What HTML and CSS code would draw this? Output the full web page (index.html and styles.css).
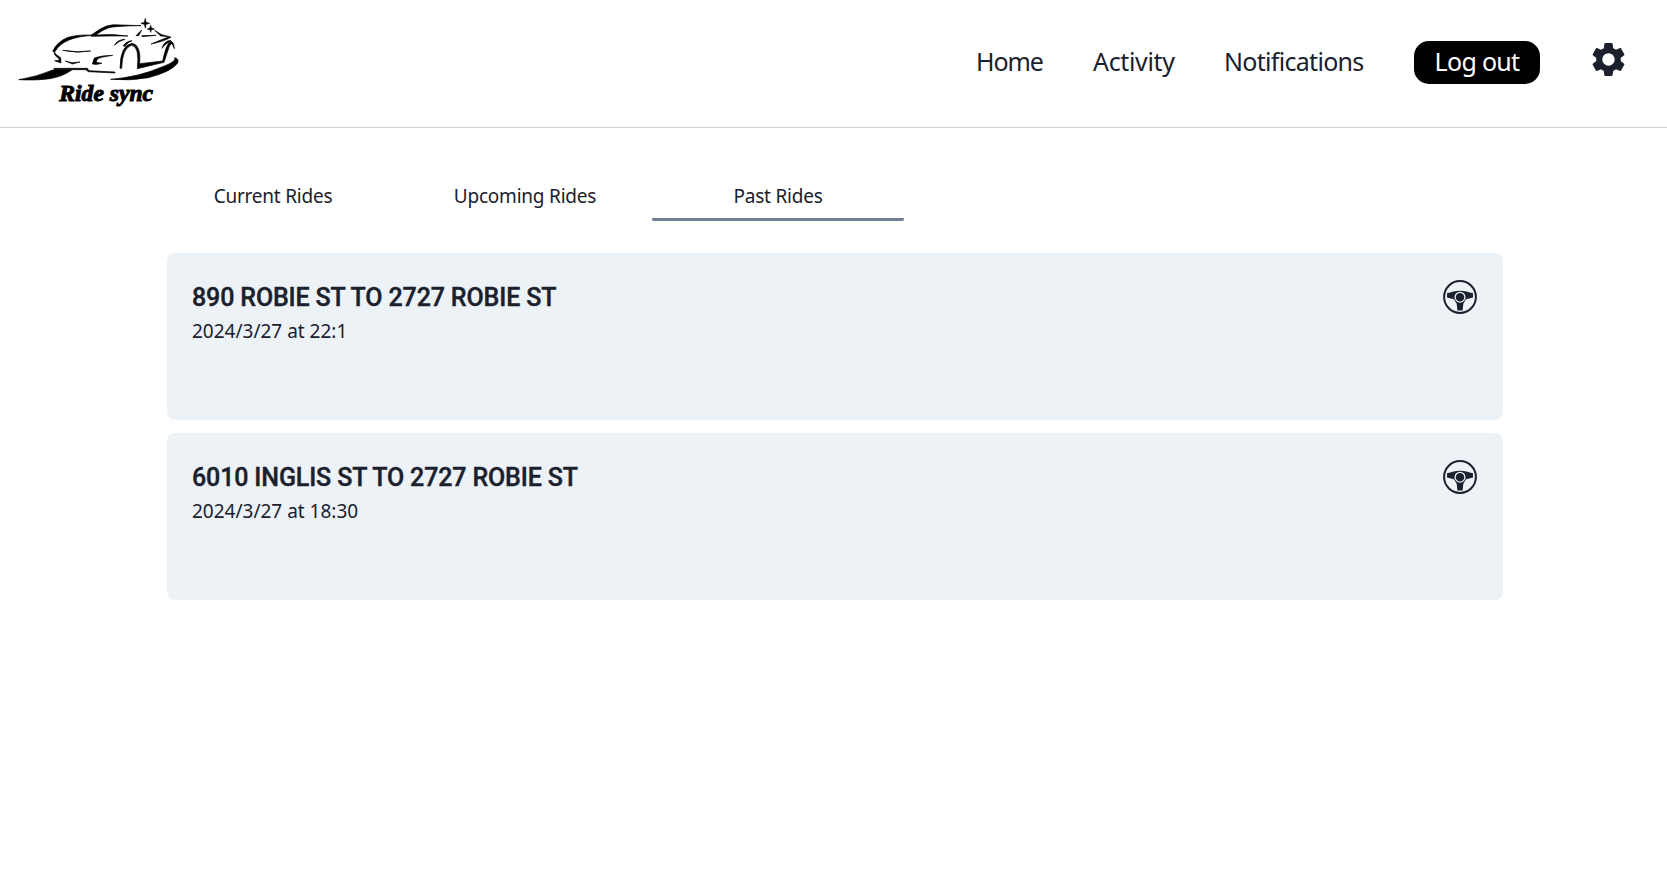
FILE: index.html
```html
<!DOCTYPE html>
<html lang="en">
<head>
<meta charset="utf-8">
<title>Ride sync</title>
<link rel="stylesheet" href="styles.css">
</head>
<body>
<svg class="defs" width="0" height="0" aria-hidden="true">
  <symbol id="wheel" viewBox="0 0 34 34">
    <circle cx="17" cy="17" r="15.900" fill="none" stroke="currentColor" stroke-width="2"/>
    <path fill="currentColor" d="M4 13.200C8 12.300 13 10.800 17 10.800s9 1.500 13 2.400v4.300l-7 1.700c-1 2-2 3-2.700 4.600L19.600 30.500h-5.200L13.700 23.800C12.900 22.200 11.900 21.200 11 19.200L4 17.500z"/>
    <circle cx="17" cy="17.200" r="4.900" fill="currentColor" stroke="#edf2f7" stroke-width="1.300"/>
  </symbol>
</svg>
<header class="header">
  <a class="logo" href="#">
    <svg viewBox="0 0 600 381" width="200" height="127" role="img" aria-label="Ride sync">
      <g class="logo-art">
        <path d="M56 239Q112 230 158 210L215 210Q190 229 150 236Q110 242 56 239z"/>
        <path d="M332 238Q420 230 485 201Q530 185 524 173Q538 176 533 189Q515 215 445 233Q390 243 332 238z"/>
        <path d="M162 205H262L267 212L345 216V219L265 215L258 209H162z"/>
        <path d="M158 154Q170 126 204 112Q240 102 285 106Q235 108 207 120Q176 133 165 155z"/>
        <path d="M273 106L299 88Q317 76 340 74L423 77Q345 78 328 83Q309 88 288 105Q330 101 384 108Q330 107 273 109z"/>
        <path d="M188 151Q230 158 272 153Q230 161 188 151z"/>
        <path d="M162 154Q167 166 182 173L183 189L164 182L178 181L176 174Q162 168 162 154z"/>
        <path d="M196 183L216 188L240 186L217 192z"/>
        <path d="M277 192L283 174Q305 166 338 166Q308 170 293 176L288 187L306 190Q290 195 277 192z"/>
        <path d="M360 205Q361 134 397 130Q424 136 419 191L488 183Q497 139 508 127Q516 123 520 131Q510 127 504 151L492 187L412 206Q419 139 395 136Q367 143 365 205z"/>
        <path d="M343 136Q352 119 375 118Q354 124 343 136z"/>
        <path d="M370 137Q379 123 396 122Q382 127 373 140z"/>
        <path d="M453 132L495 115Q508 109 513 111Q496 123 453 132z"/>
        <path d="M408 107L425 90L416 107z"/>
        <path d="M425 107L468 106L427 110z"/>
        <path d="M464 91L485 104L508 110L482 108z"/>
        <path d="M486 145Q492 124 510 121Q522 127 523 146Q518 129 509 126Q498 128 486 145z"/>
        <path d="M436 55L438 67L449 70L438 73L436 84L433 73L423 70L433 67z"/>
        <path d="M452 76L454 84L463 87L454 89L452 97L450 89L442 87L450 84z"/>
      </g>
      <text class="logo-text" x="178" y="303" textLength="281" lengthAdjust="spacingAndGlyphs">Ride sync</text>
    </svg>
  </a>
  <nav class="nav">
    <a class="home" href="#">Home</a>
    <a class="activity" href="#">Activity</a>
    <a class="notifications" href="#">Notifications</a>
    <button class="logout" type="button">Log out</button>
    <a class="settings" href="#" aria-label="Settings">
      <svg viewBox="0 0 24 24" width="41" height="41"><path fill="currentColor" d="M19.140 12.940c.040-.3.060-.61.060-.94 0-.32-.020-.64-.070-.94l2.030-1.580c.180-.14.230-.41.120-.61l-1.920-3.320c-.12-.22-.37-.29-.59-.22l-2.390.96c-.5-.38-1.030-.7-1.620-.94l-.36-2.540c-.04-.24-.24-.41-.48-.41h-3.840c-.24 0-.43.17-.47.41l-.36 2.540c-.59.24-1.130.57-1.620.94l-2.390-.96c-.22-.08-.47 0-.59.22L2.740 8.870c-.12.21-.08.47.12.61l2.030 1.580c-.05.3-.09.63-.09.94s.02.64.07.94l-2.030 1.580c-.18.14-.23.41-.12.61l1.920 3.320c.12.22.37.29.59.22l2.390-.96c.5.38 1.030.7 1.620.94l.36 2.540c.05.24.24.41.48.41h3.840c.24 0 .44-.17.47-.41l.36-2.540c.59-.24 1.130-.56 1.620-.94l2.390.96c.22.08.47 0 .59-.22l1.920-3.320c.12-.22.07-.47-.12-.61l-2.010-1.580zM12 15.600c-1.980 0-3.600-1.620-3.600-3.600s1.620-3.600 3.600-3.600 3.600 1.620 3.600 3.600-1.620 3.600-3.600 3.600z"/></svg>
    </a>
  </nav>
</header>
<main class="main">
  <div class="tabs">
    <button class="tab current" type="button">Current Rides</button>
    <button class="tab upcoming" type="button">Upcoming Rides</button>
    <button class="tab past active" type="button">Past Rides</button>
  </div>
  <section class="rides">
    <article class="card">
      <div>
        <h2>890 ROBIE ST TO 2727 ROBIE ST</h2>
        <p>2024/3/27 at 22:1</p>
      </div>
      <svg class="wheel" width="34" height="34"><use href="#wheel"/></svg>
    </article>
    <article class="card">
      <div>
        <h2>6010 INGLIS ST TO 2727 ROBIE ST</h2>
        <p>2024/3/27 at 18:30</p>
      </div>
      <svg class="wheel" width="34" height="34"><use href="#wheel"/></svg>
    </article>
  </section>
</main>
</body>
</html>
```

FILE: styles.css
```css
* { box-sizing: border-box; }
body {
  margin: 0;
  background: #fff;
  color: #1a202c;
  font-family: "Noto Sans", "Open Sans", sans-serif;
}
a { color: inherit; text-decoration: none; }
svg { display: block; }
button { border: 0; padding: 0; background: none; color: inherit; font: inherit; }
.defs { display: none; }
.header {
  display: flex;
  justify-content: space-between;
  height: 128px;
  border-bottom: 1px solid #d0d0d0;
}
.nav {
  display: flex;
  align-items: center;
  height: 124px;
  padding-right: 38px;
  font-size: 25px;
  line-height: 38px;
  white-space: nowrap;
}
.home, .activity, .notifications { padding-bottom: 2px; }
.home { width: 117px; letter-spacing: -1.1px; }
.activity { width: 131px; letter-spacing: -0.35px; }
.notifications { width: 190px; letter-spacing: -0.7px; }
.logout {
  width: 126px;
  height: 43px;
  padding-bottom: 2px;
  border-radius: 15px;
  background: #000;
  color: #fff;
  letter-spacing: -0.7px;
}
.settings { margin-left: 48px; margin-top: -6px; }
.tabs { display: flex; padding: 50px 0 0 147px; }
.tab {
  width: 252px;
  height: 43px;
  padding-bottom: 4px;
  border-bottom: 3px solid transparent;
  border-radius: 2px;
  font-size: 19px;
  line-height: 30px;
  letter-spacing: -0.22px;
  white-space: nowrap;
}
.tab.past { margin-left: 1px; }
.tab.active { border-bottom-color: #718096; }
.rides {
  display: flex;
  flex-direction: column;
  gap: 13px;
  padding: 32px 164px 0 167px;
}
.card {
  display: flex;
  justify-content: space-between;
  height: 167px;
  padding: 25px 26px 25px 25px;
  border-radius: 8px;
  background: #edf2f7;
}
.card h2 {
  margin: 0;
  padding-top: 1px;
  font: 500 25px/37px Roboto, sans-serif;
  letter-spacing: -0.14px;
  -webkit-text-stroke: 0.4px #1a202c;
}
.card p { margin: 0; font-size: 19px; line-height: 30px; }
.wheel { margin-top: 2px; }
.logo-art { fill: #000; stroke: #000; stroke-width: 2px; stroke-linejoin: round; }
.logo-text {
  fill: #000;
  stroke: #000;
  stroke-width: 3px;
  font: italic bold 68px "Liberation Serif", serif;
}
```
